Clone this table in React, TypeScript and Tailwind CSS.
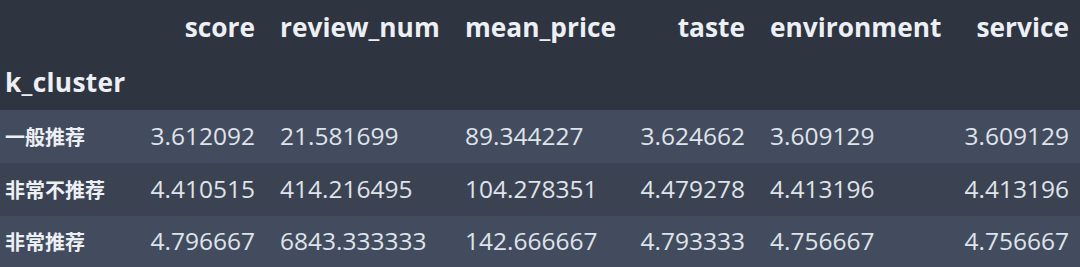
import React from 'react';

const columns = [
    { key: 'score', align: 'right' },
    { key: 'review_num', align: 'left' },
    { key: 'mean_price', align: 'left' },
    { key: 'taste', align: 'right' },
    { key: 'environment', align: 'left' },
    { key: 'service', align: 'right' },
] as const;

const rows = [
    { name: '一般推荐', values: ['3.612092', '21.581699', '89.344227', '3.624662', '3.609129', '3.609129'], bg: 'bg-[#434c5e]', h: 'h-[53px]' },
    { name: '非常不推荐', values: ['4.410515', '414.216495', '104.278351', '4.479278', '4.413196', '4.413196'], bg: 'bg-[#3b4252]', h: 'h-[53px]' },
    { name: '非常推荐', values: ['4.796667', '6843.333333', '142.666667', '4.793333', '4.756667', '4.756667'], bg: 'bg-[#434c5e]', h: 'h-[51px]' },
];

// column paddings so the text lands where the reference has it
const cellPad = ['pr-[10px] justify-end', 'pl-[15px] justify-start', 'pl-[15px] justify-start', 'pr-[10px] justify-end', 'pl-[15px] justify-start', 'pr-[11px] justify-end'];

const gridCols = 'grid grid-cols-[145px_120px_185px_190px_115px_195px_130px]';

export default function App() {
    return (
        <div className="w-[1080px] h-[267px] bg-[#2e3440] overflow-hidden font-['Open_Sans','Noto_Sans_CJK_SC',sans-serif]">
            <div className={`${gridCols} h-[55px] text-[#eceff4] font-bold text-[26.3px]`}>
                <div />
                {columns.map((c, i) => (
                    <div key={c.key} className={`flex items-center ${cellPad[i]}`}>
                        {c.key}
                    </div>
                ))}
            </div>
            <div className={`${gridCols} h-[55px] text-[#eceff4] font-bold text-[26.3px] tracking-[0.3px]`}>
                <div className="flex items-center pl-[5px] col-span-7">k_cluster</div>
            </div>
            {rows.map(r => (
                <div key={r.name} className={`${gridCols} ${r.h} ${r.bg} text-[#dfe3ea] text-[24.5px]`}>
                    <div className="flex items-center pl-[5px] font-bold text-[20px] text-[#eceff4] font-['Noto_Sans_CJK_SC',sans-serif]">
                        {r.name}
                    </div>
                    {r.values.map((v, i) => (
                        <div key={i} className={`flex items-center ${cellPad[i]}`}>
                            {v}
                        </div>
                    ))}
                </div>
            ))}
        </div>
    );
}
